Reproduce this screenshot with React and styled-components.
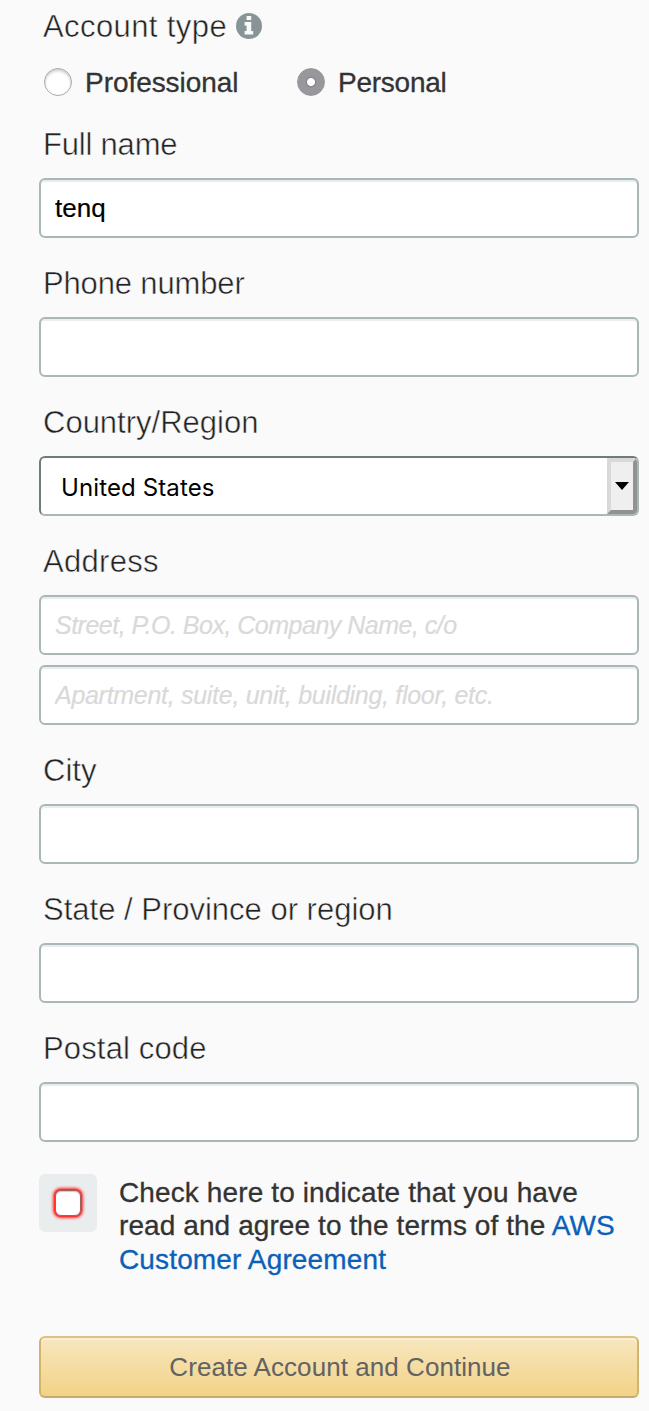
import React from "react";
import styled, { createGlobalStyle, css } from "styled-components";

const GlobalStyle = createGlobalStyle`
  *, *::before, *::after { box-sizing: border-box; }
  body {
    margin: 0;
    background: #fafafa;
    color: #333;
    font-family: "Liberation Sans", Arial, sans-serif;
  }
`;

const Form = styled.form`
  width: 600px;
  margin-left: 39px;
  padding-top: 8px;
  height: 1411px;
`;

const Field = styled.div`
  display: flex;
  flex-direction: column;
  margin-bottom: 27px;
`;

const Label = styled.label`
  display: flex;
  align-items: center;
  height: 36px;
  margin-bottom: 16px;
  padding-top: 2px;
  padding-left: 4px;
  color: #222;
  font-size: 31px;
  line-height: 36px;
  white-space: nowrap;
  letter-spacing: ${(p) => p.$spacing ?? 0}px;
  -webkit-text-stroke: 0.5px #fafafa;
`;

const InfoIcon = styled.svg`
  width: 26px;
  height: 26px;
  margin-left: 9px;
  margin-bottom: 3px;
`;

const RadioGroup = styled.div`
  display: flex;
  height: 36px;
  margin: 20px 0 26px;
  padding-left: 5px;
`;

const RadioOption = styled.label`
  display: flex;
  align-items: center;
  width: 253px;
  height: 36px;
  gap: 13px;
  font-size: 28px;
  line-height: 36px;
  letter-spacing: ${(p) => p.$spacing}px;
  -webkit-text-stroke: 0.3px #333;
`;

const OptionText = styled.span`
  padding-top: 2px;
`;

const Radio = styled.input`
  appearance: none;
  flex: none;
  width: 28px;
  height: 28px;
  margin: 0;
  border: 1px solid #a9a9a9;
  border-radius: 50%;
  background: #fff;
  box-shadow: inset 0 2px 3px rgba(0, 0, 0, 0.2);

  &:checked {
    border-color: #98979c;
    background: radial-gradient(circle at 50% 50%, #fff 3.6px, #858489 4.4px, #98979c 6px);
    box-shadow: none;
  }
`;

const control = css`
  width: 600px;
  height: 60px;
  border: 2px solid #aab7b8;
  border-radius: 6px;
  background: #fff;
  outline: none;
`;

const TextInput = styled.input`
  ${control}
  margin: 0;
  padding: 1px 14px 0;
  color: #000;
  font: 26px "Liberation Sans", Arial, sans-serif;
  letter-spacing: ${(p) => p.$spacing || 0}px;
  box-shadow: inset 0 2px 0 #eaeded;
  -webkit-text-stroke: 0.2px currentColor;

  &::placeholder {
    color: #d9d9d9;
    font-size: 25px;
    font-style: italic;
    opacity: 1;
  }

  & + & { margin-top: 10px; }
`;

const SelectBox = styled.button`
  ${control}
  display: flex;
  align-items: stretch;
  padding: 0;
  border-color: #6f7b7c #aab7b8 #aab7b8 #6f7b7c;
  overflow: hidden;
  color: #000;
  font: 24px Inter, sans-serif;
  text-align: left;
`;

const SelectValue = styled.span`
  flex: 1;
  padding-left: 20px;
  line-height: 59px;
  letter-spacing: ${(p) => p.$spacing}px;
`;

const SelectArrow = styled.span`
  display: flex;
  align-items: center;
  justify-content: center;
  width: 30px;
  border: 4px solid;
  border-color: #d9d9d9 #929292 #929292 #d9d9d9;
  border-top-right-radius: 4px;
  border-bottom-right-radius: 4px;
  background: #efefef;
`;

const Agreement = styled.div`
  display: flex;
  height: 101px;
  margin-top: 32px;
`;

const CheckTile = styled.span`
  display: flex;
  align-items: center;
  justify-content: center;
  width: 58px;
  height: 58px;
  border-radius: 6px;
  background: #eaeded;
`;

const Checkbox = styled.input`
  appearance: none;
  width: 26px;
  height: 26px;
  margin: 0;
  border: 1px solid #a06060;
  border-radius: 6px;
  background: #fff;
  box-shadow: 0 0 0 1px #ff3030, 0 0 3px 2px #ff2a2a, inset 0 1px 1px rgba(0, 0, 0, 0.2);
`;

const AgreementText = styled.div`
  margin: 2px 0 0 22px;
  font-size: 28px;
  line-height: 33.4px;
  white-space: nowrap;
  -webkit-text-stroke: 0.3px currentColor;
`;

const Line = styled.div`
  letter-spacing: ${(p) => p.$spacing}px;
`;

const Link = styled.a`
  color: #0a60b9;
  text-decoration: none;
`;

const SubmitButton = styled.button`
  display: block;
  width: 600px;
  height: 62px;
  margin-top: 61px;
  padding: 0 0 0 2px;
  border: 2px solid;
  border-color: #dcc384 #d2b56c #c6ad6b #d2b56c;
  border-radius: 6px;
  background: linear-gradient(#f7e6bf, #f2d386);
  box-shadow: inset 0 2px 0 #fbeed3;
  color: #626262;
  font: 26px "Liberation Sans", Arial, sans-serif;
  letter-spacing: ${(p) => p.$spacing}px;
`;

export default function App() {
  return (
    <>
      <GlobalStyle />
      <Form autoComplete="off" onSubmit={(e) => e.preventDefault()}>
        <Label as="div" $spacing={0.4}>
          Account type
          <InfoIcon viewBox="0 0 26 26">
            <circle cx="13" cy="13" r="13" fill="#879596" />
            <path d="M10.6 3h4.6v4.1h-4.6zM8.6 9.1h6.6v8.9h2v3.5H8.6V18h2v-5.4h-2z" fill="#fafafa" />
          </InfoIcon>
        </Label>
        <RadioGroup>
          <RadioOption $spacing={-0.05}>
            <Radio type="radio" name="accountType" />
            <OptionText>Professional</OptionText>
          </RadioOption>
          <RadioOption $spacing={-0.25}>
            <Radio type="radio" name="accountType" defaultChecked />
            <OptionText>Personal</OptionText>
          </RadioOption>
        </RadioGroup>
        <Field>
          <Label htmlFor="name" $spacing={-0.2}>Full name</Label>
          <TextInput id="name" defaultValue="tenq" spellCheck={false} />
        </Field>
        <Field>
          <Label htmlFor="phone" $spacing={-0.15}>Phone number</Label>
          <TextInput id="phone" />
        </Field>
        <Field>
          <Label htmlFor="country" $spacing={0}>Country/Region</Label>
          <SelectBox id="country" type="button">
            <SelectValue $spacing={0.12}>United States</SelectValue>
            <SelectArrow>
              <svg width="14" height="8" viewBox="0 0 14 8">
                <path d="M0 0h14L7 8z" />
              </svg>
            </SelectArrow>
          </SelectBox>
        </Field>
        <Field>
          <Label htmlFor="address" $spacing={0.3}>Address</Label>
          <TextInput id="address" $spacing={-0.5} placeholder="Street, P.O. Box, Company Name, c/o" />
          <TextInput $spacing={-0.29} placeholder="Apartment, suite, unit, building, floor, etc." />
        </Field>
        <Field>
          <Label htmlFor="city" $spacing={0}>City</Label>
          <TextInput id="city" />
        </Field>
        <Field>
          <Label htmlFor="state">State / Province or region</Label>
          <TextInput id="state" />
        </Field>
        <Field>
          <Label htmlFor="postal" $spacing={0.15}>Postal code</Label>
          <TextInput id="postal" />
        </Field>
        <Agreement>
          <CheckTile>
            <Checkbox type="checkbox" id="agree" />
          </CheckTile>
          <AgreementText>
            <Line $spacing={0.12}>Check here to indicate that you have</Line>
            <Line $spacing={0.09}>
              read and agree to the terms of the <Link>AWS</Link>
            </Line>
            <Line $spacing={0.14}>
              <Link>Customer Agreement</Link>
            </Line>
          </AgreementText>
        </Agreement>
        <SubmitButton type="submit" $spacing={0.06}>Create Account and Continue</SubmitButton>
      </Form>
    </>
  );
}
